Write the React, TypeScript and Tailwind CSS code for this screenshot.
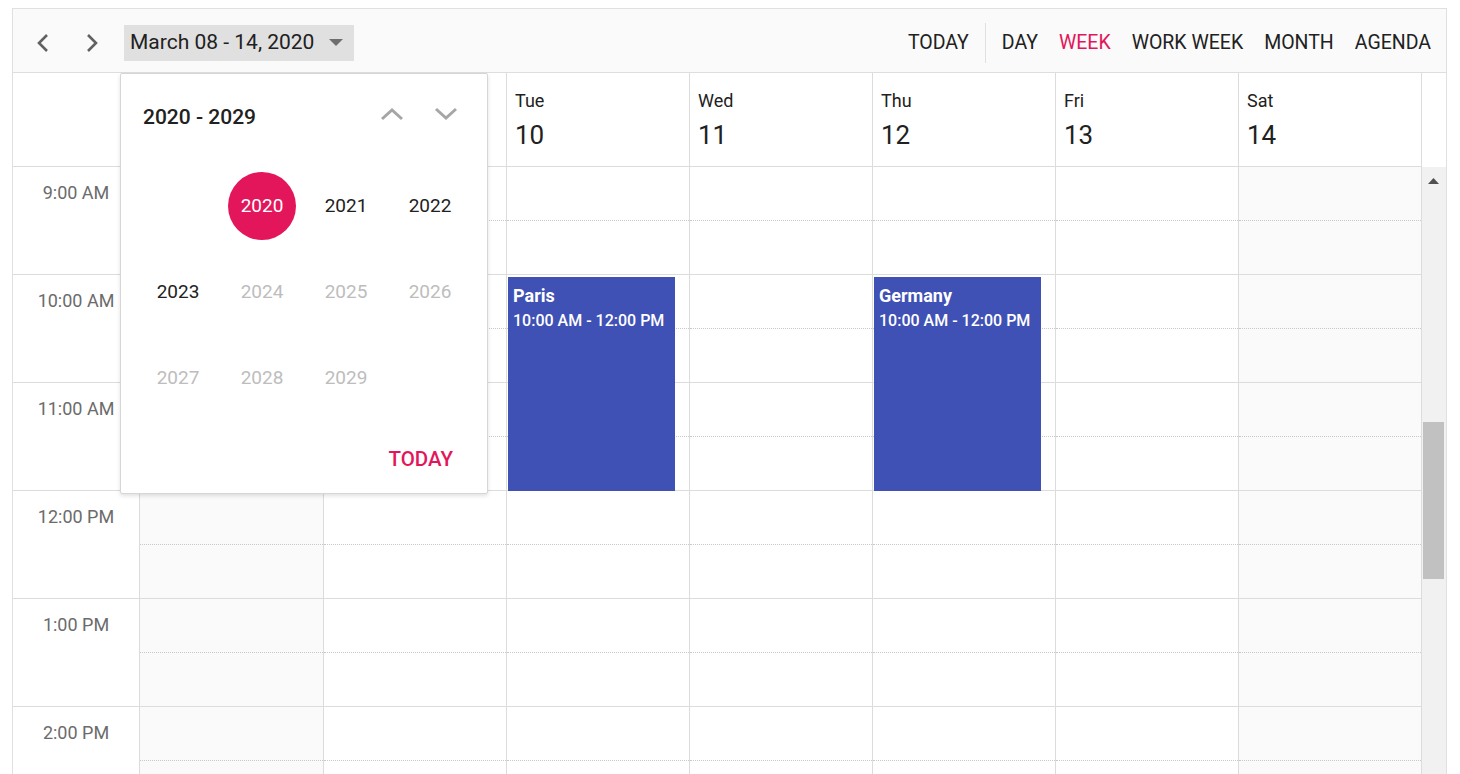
import React from "react";

const days = [
  { name: "Sun", num: "08", off: true, w: "w-[184px]" },
  { name: "Mon", num: "09", off: false, w: "w-[183px]" },
  { name: "Tue", num: "10", off: false, w: "w-[183px]" },
  { name: "Wed", num: "11", off: false, w: "w-[183px]" },
  { name: "Thu", num: "12", off: false, w: "w-[183px]" },
  { name: "Fri", num: "13", off: false, w: "w-[183px]" },
  { name: "Sat", num: "14", off: true, w: "w-[183px]" },
];

const hours = ["9:00 AM", "10:00 AM", "11:00 AM", "12:00 PM", "1:00 PM", "2:00 PM"];

const events: Record<string, string> = { Tue: "Paris", Thu: "Germany" };

function Chevron({ dir }: { dir: "left" | "right" }) {
  return (
    <svg width="14" height="20" viewBox="0 0 14 20" fill="none">
      <polyline
        points={dir === "left" ? "11,2 3,10 11,18" : "3,2 11,10 3,18"}
        stroke="#616161"
        strokeWidth="2.6"
        strokeLinecap="butt"
        strokeLinejoin="miter"
      />
    </svg>
  );
}

function SmallChevron({ dir }: { dir: "up" | "down" }) {
  return (
    <svg width="26" height="16" viewBox="0 0 26 16" fill="none">
      <polyline
        points={dir === "up" ? "3,13 13,4 23,13" : "3,3 13,12 23,3"}
        stroke="#a6a6a6"
        strokeWidth="3"
      />
    </svg>
  );
}

function YearCell({ y, kind }: { y: string; kind: "sel" | "cur" | "fade" | "empty" }) {
  return (
    <div className="w-[84px] h-[86px] flex items-center justify-center">
      {kind === "sel" ? (
        <div className="w-[68px] h-[68px] rounded-full bg-[#e3165b] text-white flex items-center justify-center text-[19px]">
          {y}
        </div>
      ) : kind === "empty" ? null : (
        <span className={`text-[19px] ${kind === "cur" ? "text-[#212121]" : "text-[#bdbdbd]"}`}>{y}</span>
      )}
    </div>
  );
}

export default function App() {
  return (
    <div className="w-[1460px] h-[774px] overflow-hidden bg-white pl-[12px] pt-[8px] font-['Roboto',sans-serif]">
      <div className="relative w-[1435px] h-[800px] border border-[#e0e0e0] bg-white">
        {/* Toolbar */}
        <div className="h-[64px] bg-[#fafafa] border-b border-[#dedede] flex items-center justify-between pl-[10px] pr-[15px] pt-[4px]">
          <div className="flex items-center">
            <button className="w-[40px] h-[40px] flex items-center justify-center">
              <Chevron dir="left" />
            </button>
            <button className="ml-[9px] w-[40px] h-[40px] flex items-center justify-center">
              <Chevron dir="right" />
            </button>
            <div className="ml-[12px] w-[230px] h-[36px] bg-[#e0e0e0] flex items-center pl-[6px] text-[21px] text-[#212121]">
              <span>March 08 - 14, 2020</span>
              <svg className="ml-[15px]" width="14" height="8" viewBox="0 0 14 8">
                <polygon points="0,0 14,0 7,7" fill="#6e6e6e" />
              </svg>
            </div>
          </div>
          <div className="flex items-center text-[19.5px] text-[#212121]">
            <span>TODAY</span>
            <div className="mx-[16px] w-px h-[40px] bg-[#e0e0e0]" />
            <div className="flex items-center gap-[21px]">
              <span>DAY</span>
              <span className="text-[#e3165b]">WEEK</span>
              <span>WORK WEEK</span>
              <span>MONTH</span>
              <span>AGENDA</span>
            </div>
          </div>
        </div>

        {/* Header row */}
        <div className="flex h-[94px]">
          <div className="w-[127px] border-r border-b border-[#dcdcdc]" />
          {days.map((d) => (
            <div key={d.name} className={`${d.w} border-r border-b border-[#dcdcdc] pl-[8px] pt-[16px] text-[#212121]`}>
              <div className="text-[18px] leading-[24px]">{d.name}</div>
              <div className="text-[26px] leading-[32px] mt-[6px]">{d.num}</div>
            </div>
          ))}
          <div className="w-[24px]" />
        </div>

        {/* Body */}
        <div className="flex h-[640px]">
          <div className="w-[127px] border-r border-[#dcdcdc]">
            {hours.map((h) => (
              <div key={h} className="h-[108px] border-b border-[#dcdcdc] text-center pt-[16px] text-[18px] leading-[20px] text-[#6b6b6b]">
                {h}
              </div>
            ))}
          </div>
          {days.map((d) => (
            <div key={d.name} className={`${d.w} relative border-r border-[#dcdcdc] ${d.off ? "bg-[#fafafa]" : "bg-white"}`}>
              {hours.map((h) => (
                <div key={h}>
                  <div className="h-[54px] border-b border-dotted border-[#c8c8c8]" />
                  <div className="h-[54px] border-b border-[#dcdcdc]" />
                </div>
              ))}
              {events[d.name] && (
                <div className="absolute left-[1px] top-[110px] w-[167px] h-[214px] bg-[#3f51b5] text-white px-[5px] pt-[7px]">
                  <div className="text-[18px] leading-[24px] font-bold">{events[d.name]}</div>
                  <div className="text-[16px] leading-[22px] font-medium mt-[2px]">10:00 AM - 12:00 PM</div>
                </div>
              )}
            </div>
          ))}
          <div className="w-[24px] bg-[#f1f1f1] relative">
            <svg className="absolute left-[6px] top-[11px]" width="11" height="6" viewBox="0 0 11 6">
              <polygon points="0,6 11,6 5.5,0" fill="#505050" />
            </svg>
            <div className="absolute left-[1px] top-[255px] w-[21px] h-[157px] bg-[#c1c1c1]" />
          </div>
        </div>

        {/* Year picker popup */}
        <div className="absolute left-[107px] top-[64px] w-[368px] h-[421px] bg-white border border-[#d6d6d6] rounded-[2px] shadow-[0_2px_4px_rgba(0,0,0,0.12)]">
          <div className="flex items-center justify-between pl-[22px] pr-[28px] pt-[30px]">
            <span className="text-[21px] font-medium text-[#212121] leading-[26px]">2020 - 2029</span>
            <div className="flex items-center gap-[28px] -mt-[6px]">
              <SmallChevron dir="up" />
              <SmallChevron dir="down" />
            </div>
          </div>
          <div className="ml-[15px] mt-[33px] grid grid-cols-4 w-[336px]">
            <YearCell y="" kind="empty" />
            <YearCell y="2020" kind="sel" />
            <YearCell y="2021" kind="cur" />
            <YearCell y="2022" kind="cur" />
            <YearCell y="2023" kind="cur" />
            <YearCell y="2024" kind="fade" />
            <YearCell y="2025" kind="fade" />
            <YearCell y="2026" kind="fade" />
            <YearCell y="2027" kind="fade" />
            <YearCell y="2028" kind="fade" />
            <YearCell y="2029" kind="fade" />
            <YearCell y="" kind="empty" />
          </div>
          <div className="flex justify-end pr-[34px] mt-[25px]">
            <span className="text-[20.5px] font-medium text-[#e3165b] leading-[26px]">TODAY</span>
          </div>
        </div>
      </div>
    </div>
  );
}
